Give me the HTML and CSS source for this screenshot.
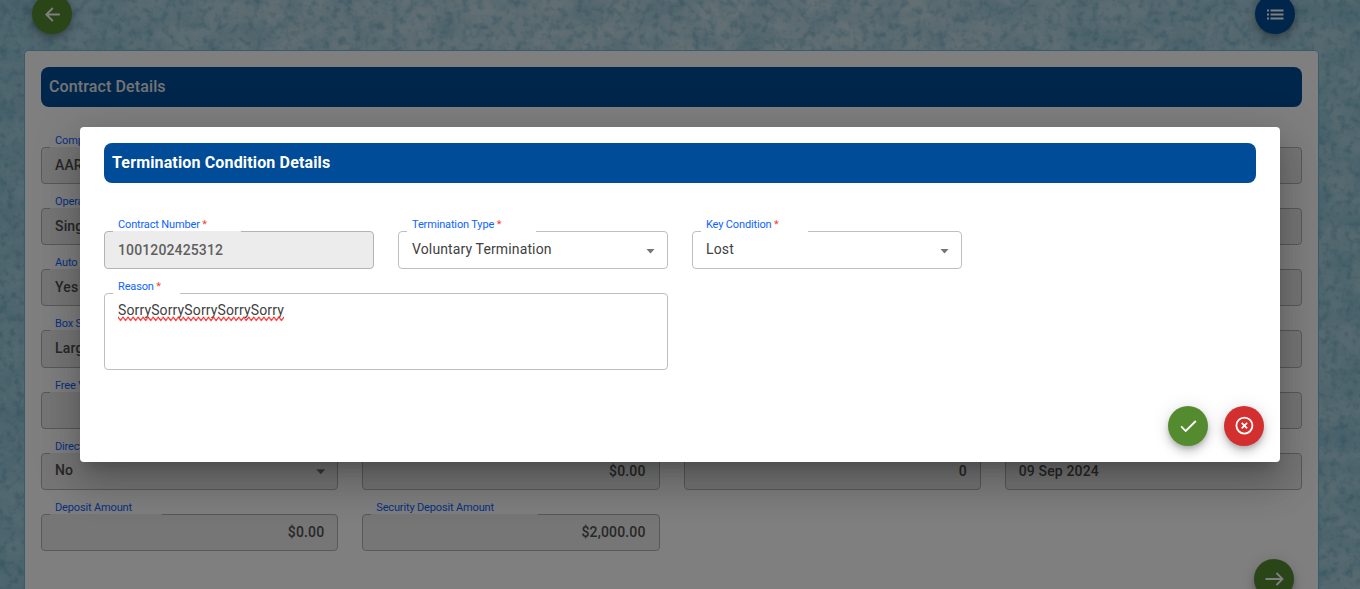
FILE: index.html
```html
<!DOCTYPE html>
<html lang="en">
<head>
<meta charset="utf-8">
<title>Contract Details</title>
<link rel="stylesheet" href="styles.css">
</head>
<body>
<svg class="paper" width="1360" height="589" aria-hidden="true">
  <filter id="mottle" x="0" y="0" width="100%" height="100%" color-interpolation-filters="sRGB">
    <feTurbulence type="fractalNoise" baseFrequency="0.03 0.04" numOctaves="6" seed="8"/>
    <feColorMatrix values="0 0 0 0 0.3  0 0 0 0 0.6  0 0 0 0 0.72  0.6 0 0 0 -0.2"/>
  </filter>
  <filter id="grain" x="0" y="0" width="100%" height="100%" color-interpolation-filters="sRGB">
    <feTurbulence type="fractalNoise" baseFrequency="0.13" numOctaves="4" seed="3"/>
    <feColorMatrix values="0 0 0 0 0.28  0 0 0 0 0.56  0 0 0 0 0.68  1 0 0 0 -0.46"/>
  </filter>
  <rect width="1360" height="589" filter="url(#mottle)"/>
  <rect width="1360" height="589" filter="url(#grain)"/>
</svg>
<div class="page">
  <div class="toolbar">
    <button class="fab green"><svg width="24" height="24" viewBox="0 0 24 24"><path d="M19.800 12.500H6.500M12.800 6L6.300 12.500L12.800 19"/></svg></button>
    <button class="fab blue"><svg width="24" height="24" viewBox="0 0 24 24"><path d="M7.500 8.500H20.500M7.500 12.500H20.500M7.500 16.500H20.500M4 8.500H6M4 12.500H6M4 16.500H6"/></svg></button>
  </div>
  <main class="card">
    <h2 class="title">Contract Details</h2>
    <div class="grid">
      <div class="field off"><label>Company</label><div class="box"><i class="notch n90"></i>AARNA</div></div>
      <div class="field off"><div class="box"></div></div>
      <div class="field off"><div class="box"></div></div>
      <div class="field off"><div class="box"></div></div>
      <div class="field off"><label>Operation Type</label><div class="box"><i class="notch n112"></i>Single</div></div>
      <div class="field off"><div class="box"></div></div>
      <div class="field off"><div class="box"></div></div>
      <div class="field off"><div class="box"></div></div>
      <div class="field off"><label>Auto Renewal</label><div class="box"><i class="notch n112"></i>Yes</div></div>
      <div class="field off"><div class="box"></div></div>
      <div class="field off"><div class="box"></div></div>
      <div class="field off"><div class="box"></div></div>
      <div class="field off"><label>Box Size</label><div class="box"><i class="notch n90"></i>Large</div></div>
      <div class="field off"><div class="box"></div></div>
      <div class="field off"><div class="box"></div></div>
      <div class="field off"><div class="box"></div></div>
      <div class="field off"><label>Free Visits</label><div class="box"><i class="notch n90"></i></div></div>
      <div class="field off"><div class="box"></div></div>
      <div class="field off"><div class="box"></div></div>
      <div class="field off"><div class="box"></div></div>
      <div class="field off pick"><label>Direct Debit</label><div class="box"><i class="notch n90"></i>No<i class="caret"></i></div></div>
      <div class="field off num"><div class="box">$0.00</div></div>
      <div class="field off num"><div class="box">0</div></div>
      <div class="field off"><div class="box">09 Sep 2024</div></div>
      <div class="field off num"><label>Deposit Amount</label><div class="box"><i class="notch n112"></i>$0.00</div></div>
      <div class="field off num"><label>Security Deposit Amount</label><div class="box"><i class="notch n167"></i>$2,000.00</div></div>
    </div>
    <div class="next"><button class="fab green"><svg width="24" height="24" viewBox="0 0 24 24"><path d="M3.500 12H20.500M14.500 6L20.500 12L14.500 18"/></svg></button></div>
  </main>
</div>
<div class="backdrop">
  <section class="dialog">
    <h2 class="title strong">Termination Condition Details</h2>
    <div class="grid form">
      <div class="field off"><label>Contract Number <b>*</b></label><div class="box"><i class="notch n128"></i>1001202425312</div></div>
      <div class="field pick"><label>Termination Type <b>*</b></label><div class="box"><i class="notch n129"></i>Voluntary Termination<i class="caret"></i></div></div>
      <div class="field pick"><label>Key Condition <b>*</b></label><div class="box"><i class="notch n107"></i>Lost<i class="caret"></i></div></div>
      <div class="field wide"><label>Reason <b>*</b></label><div class="box area"><i class="notch n67"></i><span class="typo">SorrySorrySorrySorrySorry<svg class="wave" width="166" height="6"><defs><pattern id="zig" width="5.030" height="6" patternUnits="userSpaceOnUse"><path d="M-1 -0.100L0 1L2.515 4.500L5.030 1L6.030 -0.100"/></pattern></defs><rect width="166" height="6" fill="url(#zig)"/></svg></span></div></div>
    </div>
    <div class="actions">
      <button class="fab green"><svg width="24" height="24" viewBox="0 0 24 24"><path d="M5.200 12.300L9.700 17L19.800 7"/></svg></button>
      <button class="fab red"><svg width="24" height="24" viewBox="0 0 24 24"><circle cx="12.400" cy="11.600" r="8"/><path d="M9.700 8.900L15.100 14.300M15.100 8.900L9.700 14.300"/></svg></button>
    </div>
  </section>
</div>
</body>
</html>
```
FILE: styles.css
```css
* { box-sizing: border-box; }
html, body { height: 100%; }
body {
  margin: 0;
  overflow: hidden;
  font-family: Roboto, sans-serif;
  font-size: 14px;
  background: linear-gradient(90deg, #a4d0e0, #c0dce6 20%, #c6dfe8 65%, #acd3e0);
}
.paper { position: absolute; inset: 0; }
.page { position: relative; height: 589px; padding: 0 41px 0 24px; overflow: hidden; }
.toolbar { display: flex; justify-content: space-between; height: 50px; padding: 0 24px 0 8px; }
.toolbar .fab { margin-top: -6px; }
.card {
  height: 600px;
  padding: 16px;
  border: 1px solid #6fbad6;
  border-radius: 4px;
  background: #fff;
}
.title {
  height: 40px;
  margin: 0;
  padding: 0 8px;
  border-radius: 8px;
  background: #004c98;
  color: #fff;
  font-size: 16px;
  font-weight: 500;
  line-height: 39px;
  letter-spacing: .12px;
}
.card .title { color: #e8e8e8; }
.strong { font-weight: 700; letter-spacing: .15px; }
.grid { display: grid; grid-template-columns: repeat(4, 1fr); column-gap: 24px; }
.card .grid { grid-auto-rows: 61.2px; padding-top: 25.8px; }
.field { display: flex; flex-direction: column; justify-content: flex-start; }
.field label {
  height: 14px;
  padding-left: 14px;
  color: #0d64ff;
  font-size: 11px;
  line-height: 16px;
  letter-spacing: -.15px;
  white-space: nowrap;
}
.field label b { color: #f44336; font-weight: 400; }
.box {
  position: relative;
  display: flex;
  align-items: center;
  height: 37.2px;
  padding: 0 13px;
  border: 1px solid #bfbfbf;
  border-radius: 4px;
  color: #414141;
  letter-spacing: .13px;
}
.card .box { padding-bottom: 1px; letter-spacing: .15px; }
.field:not(:has(label)) { padding-top: 14px; }
.off .box { background: #ececec; color: #5f5f5f; font-weight: 500; border-color: #b3b3b3; }
.card .off .box { color: #505050; }
.num .box { justify-content: flex-end; }
.notch { position: absolute; left: 8px; top: -1px; height: 1px; background: #fff; }
.off .notch { background: #ececec; }
.n67 { width: 67px; }
.n90 { width: 90px; }
.n107 { width: 107px; }
.n112 { width: 112px; }
.n128 { width: 128px; }
.n129 { width: 129px; }
.n167 { width: 167px; }
.pick .box { justify-content: space-between; padding-bottom: 2px; }
.card .pick .box { padding-bottom: 3px; }
.caret {
  width: 9px;
  height: 5px;
  margin: 4px -1px 0 0;
  background: #757575;
  clip-path: polygon(0 0, 100% 0, 50% 100%);
}
.next { display: flex; justify-content: flex-end; padding: 0 8px; margin-top: -2px; }
.fab {
  display: flex;
  align-items: center;
  justify-content: center;
  width: 40px;
  height: 40px;
  padding: 0;
  border: 0;
  border-radius: 50%;
  box-shadow: 0 3px 5px -1px rgba(0,0,0,.2), 0 6px 10px rgba(0,0,0,.14), 0 1px 18px rgba(0,0,0,.12);
}
.fab svg { fill: none; stroke: #fff; stroke-width: 1.8; }
.green { background: #558b2f; }
.blue { background: #004c98; }
.blue svg { stroke-width: 1.8; }
.red { background: #d32f2f; }
.backdrop {
  position: absolute;
  inset: 0;
  display: flex;
  align-items: center;
  justify-content: center;
  background: rgba(0,0,0,.5);
}
.dialog {
  display: flex;
  flex-direction: column;
  width: 1200px;
  height: 335px;
  padding: 16px 24px;
  border-radius: 4px;
  background: #fff;
  box-shadow: 0 11px 15px -7px rgba(0,0,0,.2), 0 24px 38px 3px rgba(0,0,0,.14), 0 9px 46px 8px rgba(0,0,0,.12);
}
.form { grid-template-rows: 62px auto; padding-top: 34px; }
.form .box { height: 38px; }
.wide { grid-column: span 2; }
.form .area { height: 77px; align-items: flex-start; padding-top: 8px; }
.typo { position: relative; }
.wave { position: absolute; left: 0; top: 14px; }
.wave path { fill: none; stroke: #f22; stroke-width: 1.1; }
.actions { display: flex; justify-content: flex-end; gap: 16px; margin: auto -8px 0 0; }
```
